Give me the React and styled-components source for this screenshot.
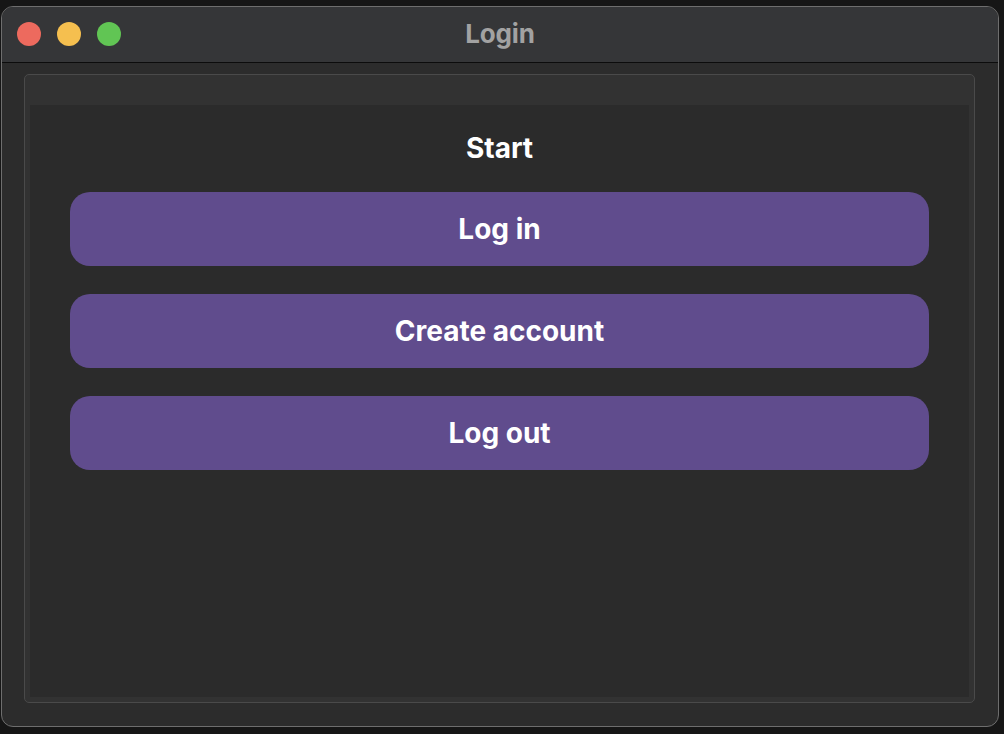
import React from 'react'
import styled, { createGlobalStyle } from 'styled-components'

const Global = createGlobalStyle`
    html, body {
        margin: 0;
        padding: 0;
        background: #161616;
    }
    body {
        font-family: Inter, "Noto Sans", "Liberation Sans", sans-serif;
        -webkit-font-smoothing: antialiased;
    }
`

const Screen = styled.div`
    width: 1004px;
    height: 734px;
    padding: 6px 5px 7px 1px;
    box-sizing: border-box;
`

const Window = styled.div`
    height: 100%;
    display: flex;
    flex-direction: column;
    border: 1px solid #6e6e6e;
    border-radius: 12px;
    overflow: hidden;
    background: #2c2c2c;
    box-sizing: border-box;
`

const TitleBar = styled.div`
    position: relative;
    height: 55px;
    flex-shrink: 0;
    display: flex;
    align-items: center;
    padding-left: 15px;
    gap: 16px;
    background: #353638;
    border-bottom: 1px solid #0c0c0c;
`

const Light = styled.span`
    width: 24px;
    height: 24px;
    border-radius: 50%;
    margin-top: -1px;
    background: ${p => p.color};
`

const Title = styled.div`
    position: absolute;
    left: 0;
    right: 0;
    top: 0;
    bottom: 2px;
    display: flex;
    align-items: center;
    justify-content: center;
    font-size: 26px;
    font-weight: 700;
    letter-spacing: -0.2px;
    color: #a2a2a2;
    pointer-events: none;
`

const Body = styled.div`
    flex: 1;
    display: flex;
    padding: 11px 23px 23px 22px;
`

const Group = styled.div`
    flex: 1;
    display: flex;
    flex-direction: column;
    padding: 30px 5px 5px 5px;
    border: 1px solid #4a4a4a;
    border-radius: 5px;
    background: #323232;
`

const Content = styled.div`
    flex: 1;
    display: flex;
    flex-direction: column;
    padding: 27px 40px 0 40px;
    background: #2b2b2b;
`

const Heading = styled.div`
    height: 32px;
    line-height: 32px;
    text-align: center;
    font-size: 28px;
    font-weight: 700;
    color: #ffffff;
    margin-bottom: 28px;
`

const Buttons = styled.div`
    display: flex;
    flex-direction: column;
    gap: 28px;
`

const Button = styled.button`
    height: 74px;
    border: none;
    border-radius: 20px;
    background: #604c8d;
    color: #ffffff;
    font-family: inherit;
    font-size: 28px;
    font-weight: 700;
    cursor: pointer;
`

const actions = ['Log in', 'Create account', 'Log out']

function App() {
    return (
        <Screen>
            <Global />
            <Window>
                <TitleBar>
                    <Light color="#ed6a5e" />
                    <Light color="#f5bf4f" />
                    <Light color="#61c554" />
                    <Title>Login</Title>
                </TitleBar>
                <Body>
                    <Group>
                        <Content>
                            <Heading>Start</Heading>
                            <Buttons>
                                {actions.map(a => <Button key={a}>{a}</Button>)}
                            </Buttons>
                        </Content>
                    </Group>
                </Body>
            </Window>
        </Screen>
    )
}

export default App
